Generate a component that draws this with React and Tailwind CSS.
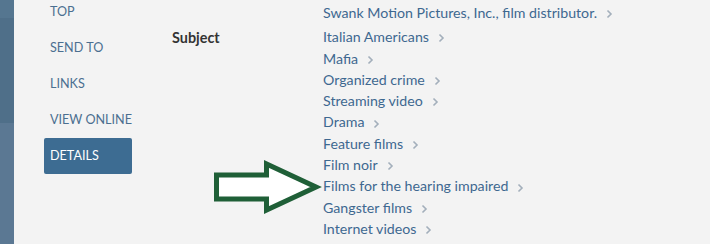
import React from 'react';

const navItems = ['TOP', 'SEND TO', 'LINKS', 'VIEW ONLINE', 'DETAILS'];

const subjects = [
  'Swank Motion Pictures, Inc., film distributor.',
  'Italian Americans',
  'Mafia',
  'Organized crime',
  'Streaming video',
  'Drama',
  'Feature films',
  'Film noir',
  'Films for the hearing impaired',
  'Gangster films',
  'Internet videos',
];

function Chevron() {
  return (
    <svg width="7" height="10" viewBox="0 0 7 10" className="ml-[9px] mt-[3px]">
      <path d="M1.5 1.5 L5 5 L1.5 8.5" fill="none" stroke="#a3afbb" strokeWidth="1.6" />
    </svg>
  );
}

export default function App() {
  return (
    <div className="relative flex h-[244px] w-[710px] overflow-hidden bg-[#f3f3f3] font-['Lato',sans-serif]">
      {/* dimmed page edge */}
      <div className="flex w-[14px] flex-col">
        <div className="h-[18px] bg-[#557690]" />
        <div className="h-[105px] bg-[#4f6f89]" />
        <div className="flex-1 bg-[#5b7893]" />
      </div>

      {/* side nav */}
      <div className="ml-[30px] flex w-[88px] flex-col">
        {navItems.map((item) =>
          item === 'DETAILS' ? (
            <div key={item} className="flex h-[36px] items-center rounded-[2px] bg-[#3d6c92] px-[6px] text-[12.6px] text-white">
              {item}
            </div>
          ) : (
            <div key={item} className="flex h-[36px] items-center px-[6px] text-[12.6px] whitespace-nowrap text-[#4b6f90] first:-mt-[6px] last:mb-0">
              {item}
            </div>
          )
        )}
      </div>

      {/* label */}
      <div className="ml-[40px] w-[151px] pt-[27px] text-[14.4px] font-bold text-[#333333]">Subject</div>

      {/* values */}
      <div className="flex flex-col pt-[2px] text-[14.2px] text-[#3e6890]">
        {subjects.map((s, i) => (
          <div key={s} className={`flex h-[21.3px] items-center whitespace-nowrap ${i === 0 ? 'mb-[3px]' : ''}`}>
            <span>{s}</span>
            <Chevron />
          </div>
        ))}
      </div>

      {/* annotation arrow */}
      <svg className="absolute left-[210px] top-[158px]" width="112" height="58" viewBox="0 0 112 58">
        <path
          d="M6.5 17 L56.5 17 L56.5 6 L106 29 L56.5 52 L56.5 41 L6.5 41 Z"
          fill="#ffffff"
          stroke="#1f5f37"
          strokeWidth="5"
          strokeLinejoin="miter"
        />
      </svg>
    </div>
  );
}
